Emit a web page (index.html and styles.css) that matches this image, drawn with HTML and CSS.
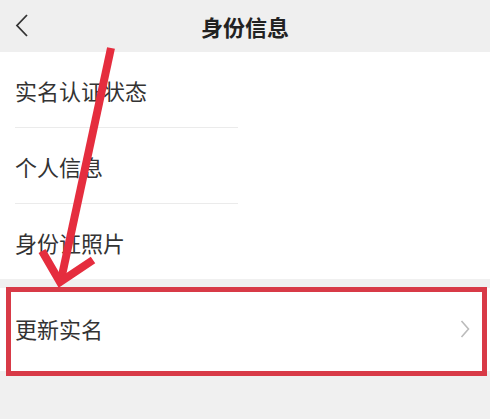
FILE: index.html
```html
<!DOCTYPE html>
<html lang="zh">
<head>
    <meta charset="UTF-8">
    <meta name="viewport" content="width=device-width, initial-scale=1.0">
    <title>身份信息</title>
    <link rel="stylesheet" href="styles.css">
</head>
<body>

    <div class="page">
        <div class="header">
            <svg class="back" width="20" height="26" viewBox="0 0 20 26">
                <polyline points="12,2 2,12.5 12,23" fill="none" stroke="#333" stroke-width="1.8"/>
            </svg>
            <h1>身份信息</h1>
        </div>

        <div class="list">
            <div class="row"><span>实名认证状态</span></div>
            <div class="divider"></div>
            <div class="row"><span>个人信息</span></div>
            <div class="divider"></div>
            <div class="row"><span>身份证照片</span></div>
        </div>

        <div class="list second">
            <div class="row tall">
                <span>更新实名</span>
                <svg class="chevron" width="10" height="18" viewBox="0 0 10 18">
                    <polyline points="1.5,1 8.5,9 1.5,17" fill="none" stroke="#bbb" stroke-width="1.6"/>
                </svg>
            </div>
            <div class="highlight"></div>
        </div>

        <!-- annotation arrow -->
        <svg class="arrow" width="490" height="419" viewBox="0 0 490 419">
            <line x1="111" y1="48" x2="61" y2="280" stroke="#e52d3e" stroke-width="8"/>
            <polyline points="42,251 60,282 93,260" fill="none" stroke="#e52d3e" stroke-width="8"/>
        </svg>
    </div>

</body>
</html>
```

FILE: styles.css
```css
body {
    margin: 0;
    padding: 0;
    background: #f0f0f0;
    font-family: "Noto Sans CJK SC", "Noto Sans", sans-serif;
    color: #333;
}

.page {
    position: relative;
    width: 490px;
    height: 419px;
    overflow: hidden;
}

.header {
    height: 52px;
    background: #efefef;
    display: flex;
    align-items: center;
    justify-content: center;
    position: relative;
}

.back {
    position: absolute;
    left: 15px;
    top: 13px;
}

h1 {
    margin: 0;
    font-size: 22px;
    font-weight: bold;
    color: #222;
}

.list {
    background: #fff;
}

.row {
    height: 75px;
    padding: 0 16px 0 15px;
    display: flex;
    align-items: center;
    justify-content: space-between;
    font-size: 22px;
}

.divider {
    height: 1px;
    width: 223px;
    margin-left: 15px;
    background: #ebebeb;
}

.second {
    margin-top: 9px;
    position: relative;
}

.tall {
    height: 80px;
    padding-right: 20px;
    padding-bottom: 3px;
}

.chevron {
    margin-top: 2px;
}

.highlight {
    position: absolute;
    left: 6px;
    top: -1px;
    right: 3px;
    bottom: -5px;
    border: 5px solid #d83a47;
}

.arrow {
    position: absolute;
    left: 0;
    top: 0;
}
```
